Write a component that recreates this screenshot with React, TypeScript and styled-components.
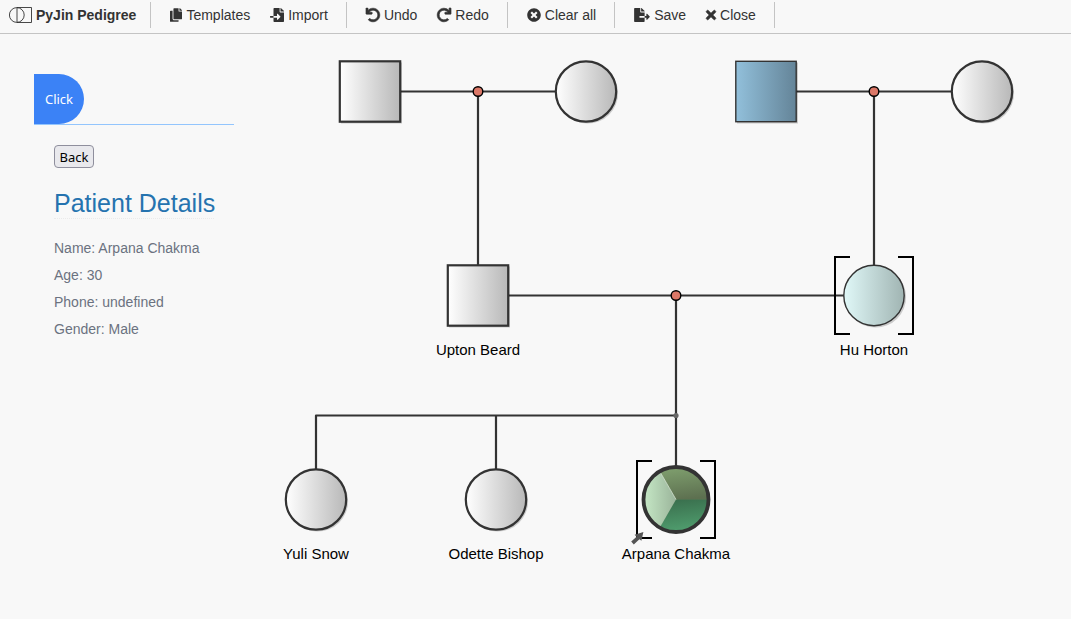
import React from "react";
import styled, { createGlobalStyle } from "styled-components";
import {
  FaCopy,
  FaFileImport,
  FaUndo,
  FaRedo,
  FaTimesCircle,
  FaFileExport,
  FaTimes,
} from "react-icons/fa";

const GlobalStyle = createGlobalStyle`
  * { box-sizing: border-box; }
  body {
    margin: 0;
    background: #f8f8f8;
    color: #333;
    font-family: "Liberation Sans", Arial, sans-serif;
    font-size: 14px;
  }
`;

const Toolbar = styled.header`
  display: flex;
  padding: 2px 0 5px;
  border-bottom: 1px solid #c4c4c4;
`;

const Brand = styled.h1`
  display: flex;
  align-items: center;
  gap: 4px;
  height: 26px;
  margin: 0;
  padding: 0 14px 0 9px;
  border-right: 1px solid #c4c4c4;
  font-size: 14px;
  line-height: 26px;
  white-space: nowrap;
`;

const ToolGroup = styled.div`
  display: flex;
  height: 26px;
  padding: 0 8px 0 9px;
  border-right: 1px solid #c4c4c4;
`;

const ToolButton = styled.button<{ $iconWidth?: number; $bold?: boolean }>`
  display: flex;
  align-items: center;
  gap: 4px;
  padding: 0 10px;
  border: 0;
  background: none;
  color: inherit;
  font: inherit;
  line-height: 26px;
  white-space: nowrap;
  cursor: pointer;

  svg {
    width: ${({ $iconWidth = 14 }) => $iconWidth}px;
    height: 14px;
    overflow: visible;
    stroke-width: ${({ $bold }) => ($bold ? 24 : 0)}px;
  }
`;

const Main = styled.main`
  display: flex;
  align-items: flex-start;
`;

const Sidebar = styled.aside`
  flex: 0 0 200px;
  min-width: 0;
  margin: 40px 0 0 34px;
`;

const TabStrip = styled.div`
  display: flex;
  border-bottom: 1px solid #93c5fd;
`;

const ClickButton = styled.button`
  width: 50px;
  height: 50px;
  padding: 0;
  border: 0;
  border-radius: 0 25px 25px 0;
  background: #3b82f6;
  color: #fff;
  font-family: "Noto Sans", sans-serif;
  font-size: 13px;
  cursor: pointer;
`;

const Details = styled.section`
  padding: 20px 20px 0;
`;

const BackButton = styled.button`
  display: block;
  width: 40px;
  height: 23px;
  padding: 0;
  border: 1px solid #8f8f9d;
  border-radius: 4px;
  background: #e9e9ed;
  color: #000;
  font-family: "Noto Sans", sans-serif;
  font-size: 13px;
  line-height: 20px;
  cursor: pointer;
`;

const DetailsTitle = styled.h2`
  margin: 20px 0 16px;
  border-bottom: 1px dotted #eaeaea;
  color: #2573af;
  font-size: 25px;
  font-weight: 400;
  line-height: 30px;
  white-space: nowrap;
`;

const DetailLine = styled.p`
  margin: 0;
  color: #6b7280;
  line-height: 27px;
`;

const Chart = styled.svg`
  flex: 1 1 0;
  min-width: 0;
`;

const Label = styled.text`
  fill: #000;
  font-size: 15px;
  text-anchor: middle;
`;

const LINE = "#333";

type Person = {
  x: number;
  y: number;
  shape: "square" | "circle";
  fill?: string;
  thin?: boolean;
  name?: string;
};

const people: Person[] = [
  { x: 370, y: 91.5, shape: "square" },
  { x: 586, y: 91.5, shape: "circle" },
  { x: 766, y: 91.5, shape: "square", fill: "url(#blue)", thin: true },
  { x: 982, y: 91.5, shape: "circle" },
  { x: 478, y: 295.5, shape: "square", name: "Upton Beard" },
  { x: 874, y: 295.5, shape: "circle", fill: "url(#aqua)", thin: true, name: "Hu Horton" },
  { x: 316, y: 499.5, shape: "circle", name: "Yuli Snow" },
  { x: 496, y: 499.5, shape: "circle", name: "Odette Bishop" },
];

const PersonNode = ({ x, y, shape, fill = "url(#grey)", thin, name }: Person) => {
  const stroke = thin ? 1.4 : 2.2;
  return (
    <g>
      {shape === "square" ? (
        <>
          <rect x={x - 29} y={y - 29} width="61" height="61" fill="#000" opacity="0.18" />
          <rect x={x - 30.2} y={y - 30.2} width="60.4" height="60.4" fill={fill} stroke={LINE} strokeWidth={stroke} />
        </>
      ) : (
        <>
          <circle cx={x + 1.6} cy={y + 1.6} r="30.5" fill="#000" opacity="0.18" />
          <circle cx={x} cy={y} r="30.2" fill={fill} stroke={LINE} strokeWidth={stroke} />
        </>
      )}
      {name && <Label x={x} y={y + 59.5}>{name}</Label>}
    </g>
  );
};

const Brackets = ({ x, y }: { x: number; y: number }) => (
  <path
    d={`M${x - 24} ${y - 38.5}H${x - 39}V${y + 38.5}H${x - 24}M${x + 24} ${y - 38.5}H${x + 39}V${y + 38.5}H${x + 24}`}
    fill="none"
    stroke="#000"
    strokeWidth="2"
  />
);

const Gradient = ({ id, from, to }: { id: string; from: string; to: string }) => (
  <linearGradient id={id}>
    <stop offset="0" stopColor={from} />
    <stop offset="1" stopColor={to} />
  </linearGradient>
);

const Pedigree = () => (
  <Chart viewBox="234 34 837 585" preserveAspectRatio="xMinYMin meet" role="img" aria-label="Family pedigree">
    <defs>
      <Gradient id="grey" from="#ffffff" to="#b8b8b8" />
      <Gradient id="blue" from="#92c0db" to="#648498" />
      <Gradient id="aqua" from="#e0f8f8" to="#a0b4b2" />
      <Gradient id="mint" from="#c6e8c6" to="#9ab49a" />
      <linearGradient id="olive" x1="0.3" y1="0" x2="0.5" y2="1">
        <stop offset="0" stopColor="#7f9f6e" />
        <stop offset="1" stopColor="#5d7050" />
      </linearGradient>
      <linearGradient id="green" x1="0.6" y1="1" x2="0.4" y2="0">
        <stop offset="0" stopColor="#51a070" />
        <stop offset="1" stopColor="#3a704e" />
      </linearGradient>
    </defs>

    <path
      d="M400 91.5H556M478 91V265M796 91.5H952M874 91V265M508 295.5H844M676 295V466M316 469V415.5H676M496 415V469"
      fill="none"
      stroke={LINE}
      strokeWidth="2.2"
      strokeLinejoin="round"
    />
    <circle cx="676" cy="415.5" r="2.6" fill="#666" />
    {[[478, 91.5], [874, 91.5], [676, 295.5]].map(([x, y]) => (
      <circle key={`${x}-${y}`} cx={x} cy={y} r="4.8" fill="#dc7868" stroke="#000" strokeWidth="1.4" />
    ))}

    <Brackets x={874} y={295.5} />
    {people.map((p) => (
      <PersonNode key={`${p.x}-${p.y}`} {...p} />
    ))}

    <Brackets x={676} y={499.5} />
    <circle cx="676" cy="499.5" r="32" fill="#4b7a55" />
    <path d="M676 499.5H708.5A32.5 32.5 0 0 1 659.75 527.65Z" fill="url(#green)" />
    <path d="M676 499.5L659.75 527.65A32.5 32.5 0 0 1 659.75 471.35Z" fill="url(#mint)" />
    <path d="M676 499.5L659.75 471.35A32.5 32.5 0 0 1 708.5 499.5Z" fill="url(#olive)" />
    <path d="M676 499.5L659.75 471.35" stroke="#d8e4d4" strokeWidth="0.8" />
    <circle cx="676" cy="499.5" r="32.5" fill="none" stroke={LINE} strokeWidth="3.8" />
    <path d="M631.2 541.6L636.6 536.8L634.6 534.8L643.4 532L641.4 540.8L639.4 539.2L633.8 544.4Z" fill="#555" />
    <Label x="676" y="559">Arpana Chakma</Label>
  </Chart>
);

const BrandLogo = () => (
  <svg width="23" height="18" viewBox="0 0 23 18" fill="none" stroke="#333" strokeWidth="0.9" aria-hidden="true">
    <circle cx="7.8" cy="9" r="7.4" />
    <path d="M8 1.5H22.5V16.5H8Z" />
  </svg>
);

const App = () => (
  <>
    <GlobalStyle />
    <Toolbar>
      <Brand>
        <BrandLogo />
        PyJin Pedigree
      </Brand>
      <ToolGroup>
        <ToolButton $iconWidth={12}><FaCopy />Templates</ToolButton>
        <ToolButton><FaFileImport />Import</ToolButton>
      </ToolGroup>
      <ToolGroup>
        <ToolButton $bold><FaUndo />Undo</ToolButton>
        <ToolButton $bold><FaRedo />Redo</ToolButton>
      </ToolGroup>
      <ToolGroup>
        <ToolButton><FaTimesCircle />Clear all</ToolButton>
      </ToolGroup>
      <ToolGroup>
        <ToolButton $iconWidth={16}><FaFileExport />Save</ToolButton>
        <ToolButton $iconWidth={10} $bold><FaTimes />Close</ToolButton>
      </ToolGroup>
    </Toolbar>
    <Main>
      <Sidebar>
        <TabStrip>
          <ClickButton>Click</ClickButton>
        </TabStrip>
        <Details>
          <BackButton>Back</BackButton>
          <DetailsTitle>Patient Details</DetailsTitle>
          <DetailLine>Name: Arpana Chakma</DetailLine>
          <DetailLine>Age: 30</DetailLine>
          <DetailLine>Phone: undefined</DetailLine>
          <DetailLine>Gender: Male</DetailLine>
        </Details>
      </Sidebar>
      <Pedigree />
    </Main>
  </>
);

export default App;
